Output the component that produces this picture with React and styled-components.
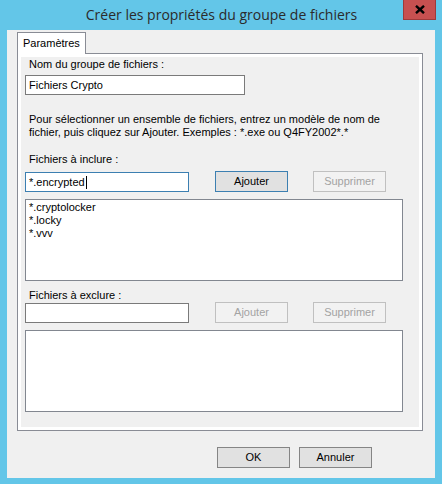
import React from "react";
import styled, { createGlobalStyle } from "styled-components";

const Global = createGlobalStyle`
  html, body { margin: 0; padding: 0; }
  body { background: #63c6e8; font-family: "Liberation Sans", Arial, sans-serif; }
`;

const Window = styled.div`
  width: 442px;
  height: 484px;
  background: #63c6e8;
  display: flex;
  flex-direction: column;
  box-sizing: border-box;
`;

const TitleBar = styled.div`
  height: 30px;
  position: relative;
  display: flex;
  align-items: center;
  justify-content: center;
`;

const Title = styled.div`
  font-family: "Open Sans", "Noto Sans", sans-serif;
  font-size: 14px;
  color: #2b2b2b;
  margin-top: -1px;
  margin-left: 1px;
`;

const CloseButton = styled.div`
  position: absolute;
  top: 0;
  right: 6px;
  width: 33px;
  height: 20px;
  box-sizing: border-box;
  background: #c75050;
  border: 1px solid #9e3a3a;
  border-top: none;
  display: flex;
  align-items: center;
  justify-content: center;
`;

const Client = styled.div`
  margin: 0 7px 6px 7px;
  flex: 1;
  background: #f0f0f0;
  display: flex;
  flex-direction: column;
  padding: 2px 12px 0 10px;
  box-sizing: border-box;
`;

const TabStrip = styled.div`
  display: flex;
`;

const Tab = styled.div`
  width: 69px;
  height: 22px;
  box-sizing: border-box;
  border: 1px solid #898c95;
  border-bottom: none;
  background: #ffffff;
  font-size: 11px;
  line-height: 13px;
  color: #000;
  padding: 4px 0 0 5px;
  margin-bottom: -1px;
  position: relative;
  z-index: 1;
`;

const Panel = styled.div`
  height: 378px;
  box-sizing: border-box;
  border: 1px solid #898c95;
  background: #f0f0f0;
  box-shadow: inset 0 0 0 3px #ffffff;
  padding: 4px 7px;
  display: flex;
  flex-direction: column;
`;

const Label = styled.div`
  font-size: 11px;
  line-height: 13px;
  color: #000;
  padding-left: 4px;
  margin-top: ${(p) => p.$top}px;
`;

const Paragraph = styled(Label)`
  white-space: pre-line;
`;

const TextBox = styled.div`
  box-sizing: border-box;
  width: ${(p) => p.$width}px;
  height: 20px;
  background: #fff;
  border: 1px solid ${(p) => (p.$focused ? "#3c7fb1" : "#7a7a7a")};
  font-size: 11px;
  line-height: 13px;
  padding: 2px 3px;
  margin-top: ${(p) => p.$top || 0}px;
  color: #000;
  white-space: nowrap;
  display: flex;
  align-items: center;
`;

const Caret = styled.span`
  display: inline-block;
  width: 1px;
  height: 13px;
  background: #000;
  margin-left: 1px;
`;

const Row = styled.div`
  display: flex;
  align-items: flex-start;
  margin-top: ${(p) => p.$top}px;
`;

const Button = styled.div`
  box-sizing: border-box;
  width: 73px;
  height: 21px;
  margin-left: ${(p) => p.$left || 0}px;
  background: ${(p) => (p.$disabled ? "#f2f2f2" : "#e1e1e1")};
  border: 1px solid
    ${(p) => (p.$disabled ? "#c0c0c0" : p.$default ? "#3c7fb1" : "#858585")};
  color: ${(p) => (p.$disabled ? "#a3a3a3" : "#000")};
  font-size: 11px;
  line-height: 13px;
  display: flex;
  align-items: center;
  justify-content: center;
`;

const ListBox = styled.div`
  box-sizing: border-box;
  width: 378px;
  height: 82px;
  background: #fff;
  border: 1px solid #828790;
  margin-top: ${(p) => p.$top}px;
  padding: 1px 3px;
  font-size: 11px;
  line-height: 13px;
  color: #000;
`;

const Footer = styled.div`
  display: flex;
  padding: 16px 0 0 200px;
  gap: 9px;
`;

const includes = ["*.cryptolocker", "*.locky", "*.vvv"];

export default function App() {
  return (
    <>
      <Global />
      <Window>
        <TitleBar>
          <Title>Créer les propriétés du groupe de fichiers</Title>
          <CloseButton>
            <svg width="10" height="9" viewBox="0 0 10 9">
              <path d="M1 0.8 L9 8.2 M9 0.8 L1 8.2" stroke="#000" strokeWidth="2.4" />
            </svg>
          </CloseButton>
        </TitleBar>
        <Client>
          <TabStrip>
            <Tab>Paramètres</Tab>
          </TabStrip>
          <Panel>
            <Label $top={0}>Nom du groupe de fichiers :</Label>
            <TextBox $width={220} $top={4}>Fichiers Crypto</TextBox>
            <Paragraph $top={18}>
              {"Pour sélectionner un ensemble de fichiers, entrez un modèle de nom de\nfichier, puis cliquez sur Ajouter. Exemples : *.exe ou Q4FY2002*.*"}
            </Paragraph>
            <Label $top={14}>Fichiers à inclure :</Label>
            <Row $top={5}>
              <TextBox $width={164} $top={1} $focused>
                *.encrypted<Caret />
              </TextBox>
              <Button $left={26} $default>Ajouter</Button>
              <Button $left={25} $disabled>Supprimer</Button>
            </Row>
            <ListBox $top={7}>
              {includes.map((f) => (
                <div key={f}>{f}</div>
              ))}
            </ListBox>
            <Label $top={8}>Fichiers à exclure :</Label>
            <Row $top={0}>
              <TextBox $width={164} $top={1} />
              <Button $left={26} $disabled>Ajouter</Button>
              <Button $left={25} $disabled>Supprimer</Button>
            </Row>
            <ListBox $top={7} />
          </Panel>
          <Footer>
            <Button>OK</Button>
            <Button>Annuler</Button>
          </Footer>
        </Client>
      </Window>
    </>
  );
}
